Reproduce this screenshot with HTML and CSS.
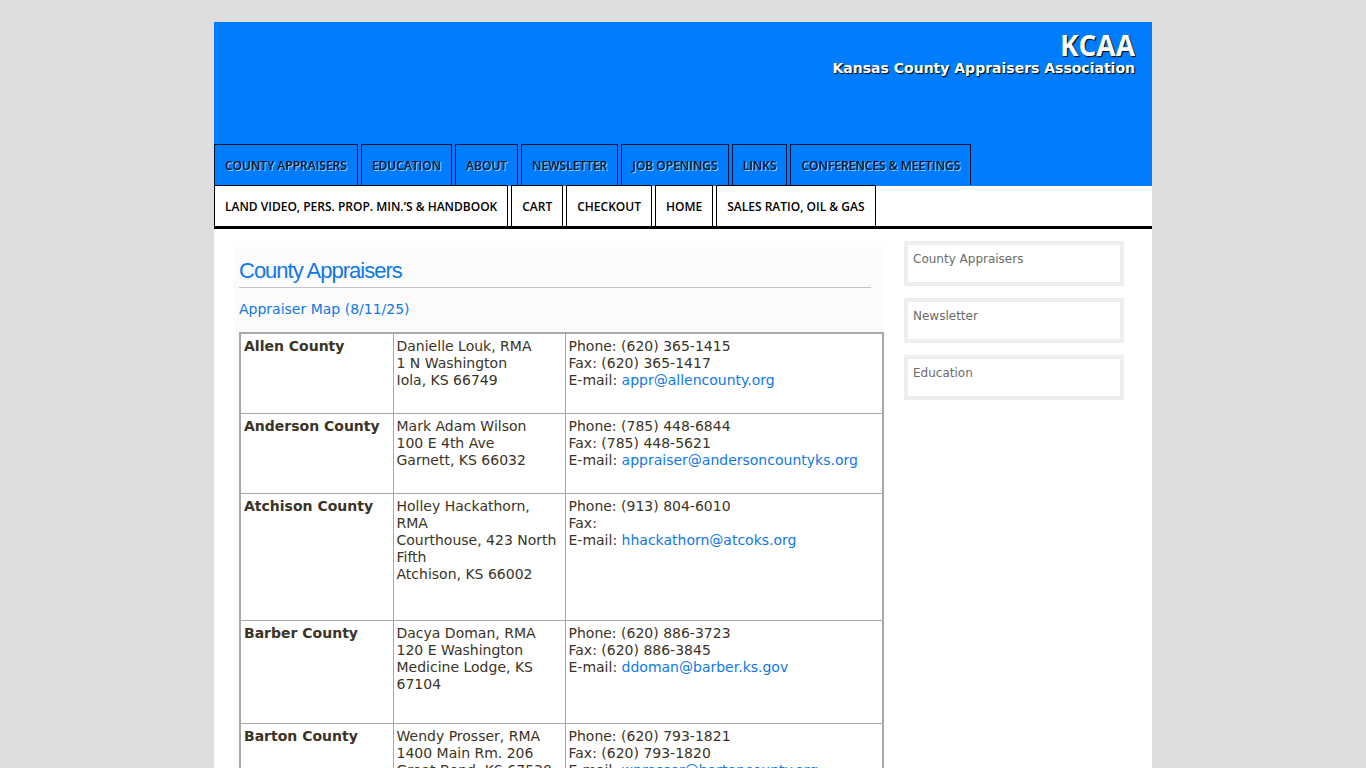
FILE: index.html
```html
<!DOCTYPE html>
<html lang="en">
<head>
<meta charset="utf-8">
<title>KCAA - County Appraisers</title>
<link rel="stylesheet" href="styles.css">
</head>
<body>
<div class="page">
  <header class="banner">
    <div class="brand">
      <h1 class="brand-name">KCAA</h1>
      <p class="brand-tagline">Kansas County Appraisers Association</p>
    </div>
  </header>
  <nav class="menu" aria-label="Main">
    <ul class="menu-row menu-primary">
      <li><a href="#">County Appraisers</a></li>
      <li><a href="#">Education</a></li>
      <li><a href="#">About</a></li>
      <li><a href="#">Newsletter</a></li>
      <li><a href="#">Job Openings</a></li>
      <li><a href="#">Links</a></li>
      <li><a href="#">Conferences &amp; Meetings</a></li>
    </ul>
    <ul class="menu-row menu-secondary">
      <li><a href="#">Land Video, Pers. Prop. Min.’s &amp; Handbook</a></li>
      <li><a href="#">Cart</a></li>
      <li><a href="#">Checkout</a></li>
      <li><a href="#">Home</a></li>
      <li><a href="#">Sales Ratio, Oil &amp; Gas</a></li>
    </ul>
  </nav>
  <div class="columns">
    <main class="content">
      <h2 class="content-title">County Appraisers</h2>
      <p class="map-link"><a href="#">Appraiser Map (8/11/25)</a></p>
      <table class="directory">
        <colgroup><col class="col-county"><col class="col-address"><col class="col-contact"></colgroup>
        <tbody>
          <tr class="lines-3">
            <th scope="row">Allen County</th>
            <td>Danielle Louk, RMA<br>1 N Washington<br>Iola, KS 66749</td>
            <td>Phone: (620) 365-1415<br>Fax: (620) 365-1417<br>E-mail: <a href="#">appr@allencounty.org</a></td>
          </tr>
          <tr class="lines-3">
            <th scope="row">Anderson County</th>
            <td>Mark Adam Wilson<br>100 E 4th Ave<br>Garnett, KS 66032</td>
            <td>Phone: (785) 448-6844<br>Fax: (785) 448-5621<br>E-mail: <a href="#">appraiser@andersoncountyks.org</a></td>
          </tr>
          <tr class="lines-5">
            <th scope="row">Atchison County</th>
            <td>Holley Hackathorn, RMA<br>Courthouse, 423 North Fifth<br>Atchison, KS 66002</td>
            <td>Phone: (913) 804-6010<br>Fax:<br>E-mail: <a href="#">hhackathorn@atcoks.org</a></td>
          </tr>
          <tr class="lines-4">
            <th scope="row">Barber County</th>
            <td>Dacya Doman, RMA<br>120 E Washington<br>Medicine Lodge, KS 67104</td>
            <td>Phone: (620) 886-3723<br>Fax: (620) 886-3845<br>E-mail: <a href="#">ddoman@barber.ks.gov</a></td>
          </tr>
          <tr class="lines-3">
            <th scope="row">Barton County</th>
            <td>Wendy Prosser, RMA<br>1400 Main Rm. 206<br>Great Bend, KS 67530</td>
            <td>Phone: (620) 793-1821<br>Fax: (620) 793-1820<br>E-mail: <a href="#">wprosser@bartoncounty.org</a></td>
          </tr>
        </tbody>
      </table>
    </main>
    <aside class="sidebar">
      <a class="side-link" href="#">County Appraisers</a>
      <a class="side-link" href="#">Newsletter</a>
      <a class="side-link" href="#">Education</a>
    </aside>
  </div>
</div>
</body>
</html>
```
FILE: styles.css
```css
html {
  overflow: hidden;
}

body {
  margin: 0;
  padding: 22px 16px 0;
  background: #dedede;
  color: #3b3325;
  font: 14px/17px Verdana, "DejaVu Sans", sans-serif;
}

a {
  color: #0f78e8;
  text-decoration: none;
}

.page {
  max-width: 938px;
  margin: 0 auto;
  background: #fff;
}

/* Banner */
.banner {
  min-height: 122px;
  background: #007dff;
}

.brand {
  padding: 8px 17px 0;
  color: #fff;
  text-align: right;
  text-shadow: 1px 1px 1px #000;
}

.brand-name {
  margin: 0;
  font: bold 28px/30px "Open Sans", sans-serif;
}

.brand-tagline {
  margin: 0;
  font-weight: bold;
}

/* Menu */
.menu {
  border-bottom: 3px solid #000;
}

.menu-row {
  display: flex;
  flex-wrap: wrap;
  gap: 0 3px;
  margin: 0;
  padding: 0;
  list-style: none;
}

.menu-row a {
  display: block;
  padding: 2px 10px 0;
  border: solid #000;
  border-width: 1px 1px 0;
  color: #000;
  font: 600 12px/38px "Open Sans", sans-serif;
  text-transform: uppercase;
}

.menu-primary {
  padding-bottom: 1px;
  background: #007dff;
}

.menu-primary a {
  border-color: #001030;
  color: #00142c;
  text-shadow: 1px 1px 0 #8fd0ff;
}

.menu-secondary {
  margin-top: -1px;
}

/* Columns */
.columns {
  display: flex;
  align-items: flex-start;
  gap: 20px;
  padding: 12px 28px 0 19px;
}

.content {
  flex: 1;
  min-width: 0;
  margin-top: 6px;
  padding: 10px 0 0 6px;
  background: #fbfbfb;
}

.content-title {
  margin: 0 13px 13px 0;
  padding-bottom: 2px;
  border-bottom: 1px solid #c4c4c4;
  color: #0f78e8;
  font: 22px/28px Arial, "Liberation Sans", sans-serif;
  letter-spacing: -1px;
}

.map-link {
  margin: 0 0 14px;
}

.directory {
  width: 100%;
  border: 2px solid #a8a8a8;
  border-collapse: collapse;
  table-layout: fixed;
  background: #fff;
}

.col-county {
  width: 153px;
}

.col-address {
  width: 172px;
}

.directory th,
.directory td {
  padding: 4px 3px 3px;
  border: 1px solid #a8a8a8;
  text-align: left;
  vertical-align: top;
}

.lines-3 {
  height: 80px;
}

.lines-4 {
  height: 103px;
}

.lines-5 {
  height: 127px;
}

/* Sidebar */
.sidebar {
  display: flex;
  flex: 0 0 220px;
  flex-direction: column;
  gap: 12px;
}

.side-link {
  padding: 6px 5px 14px;
  border: 4px solid #eee;
  color: #6b6b6b;
  font-size: 12px;
}
```
